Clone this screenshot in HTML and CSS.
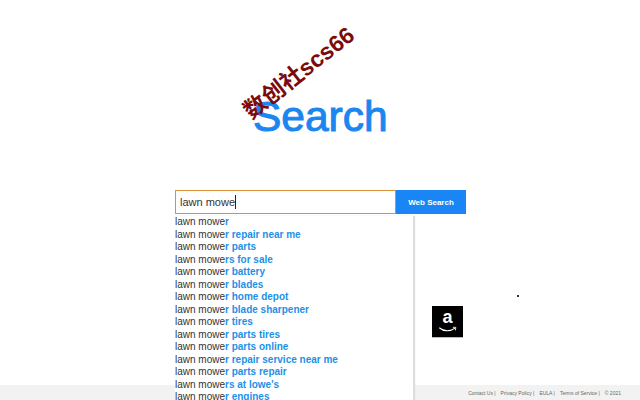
FILE: index.html
```html
<!DOCTYPE html>
<html lang="en">
<head>
<meta charset="utf-8">
<title>Search</title>
<link rel="stylesheet" href="styles.css">
</head>
<body>
<main class="page">
  <h1 class="logo">Search</h1>
  <div class="watermark">数创社scs66</div>
  <form class="search">
    <div class="field">lawn mowe<span class="caret"></span></div>
    <button class="go" type="button">Web Search</button>
  </form>
  <div class="below">
    <ul class="suggest">
      <li>lawn mowe<b>r</b></li>
      <li>lawn mowe<b>r repair near me</b></li>
      <li>lawn mowe<b>r parts</b></li>
      <li>lawn mowe<b>rs for sale</b></li>
      <li>lawn mowe<b>r battery</b></li>
      <li>lawn mowe<b>r blades</b></li>
      <li>lawn mowe<b>r home depot</b></li>
      <li>lawn mowe<b>r blade sharpener</b></li>
      <li>lawn mowe<b>r tires</b></li>
      <li>lawn mowe<b>r parts tires</b></li>
      <li>lawn mowe<b>r parts online</b></li>
      <li>lawn mowe<b>r repair service near me</b></li>
      <li>lawn mowe<b>r parts repair</b></li>
      <li>lawn mowe<b>rs at lowe's</b></li>
      <li>lawn mowe<b>r engines</b></li>
    </ul>
    <div class="side">
      <span class="dot"></span>
      <div class="amazon" aria-label="Amazon">
        <span class="amazon-a">a</span>
        <svg class="smile" viewBox="0 0 22 8" width="20" height="7">
          <path d="M1 2 C6 6.5 14 6.5 19 2.5" fill="none" stroke="#fff" stroke-width="1.2"/>
          <path d="M16.5 1.5 L20 1.6 L19.4 5" fill="none" stroke="#fff" stroke-width="1"/>
        </svg>
      </div>
    </div>
  </div>
</main>
<footer class="foot">
  <span>Contact Us |</span><span>Privacy Policy |</span><span>EULA |</span><span>Terms of Service |</span><span>© 2021</span>
</footer>
</body>
</html>
```
FILE: styles.css
```css
* { box-sizing: border-box; }
html, body { margin: 0; height: 400px; overflow: hidden; background: #fff; font-family: "Liberation Sans", Arial, sans-serif; }
body { position: relative; }
.page { display: flex; flex-direction: column; align-items: flex-start; padding: 93px 0 0 175px; }
.logo { margin: 0 0 0 78px; font-size: 42.5px; line-height: 48px; font-weight: 400; color: #1a86f0; -webkit-text-stroke: 1px #1a86f0; }
.watermark { position: absolute; left: 231px; top: 54px; width: 145px; font-family: "Liberation Sans", "Noto Sans CJK SC", sans-serif; font-size: 23px; line-height: 30px; font-weight: 700; color: #7a0a0e; white-space: nowrap; transform: rotate(-38deg); transform-origin: center; }
.search { display: flex; margin-top: 49px; }
.field { width: 221px; height: 24px; border: 1px solid #dc9138; padding-left: 4px; font-size: 11px; line-height: 22px; color: #333; display: flex; align-items: center; background: #fff; }
.caret { width: 1px; height: 14px; background: #222; }
.go { width: 70px; height: 24px; border: 0; padding: 0; background: #1a86f5; color: #fff; font: 700 8px "Liberation Sans", Arial, sans-serif; }
.below { display: flex; margin-top: 2px; }
.suggest { list-style: none; margin: 0; padding: 0; width: 239px; height: 185px; overflow: hidden; background: #fff; border-right: 1px solid #ddd; box-shadow: 1px 0 1px #ddd; position: relative; z-index: 1; }
.suggest li { height: 12.5px; font-size: 10px; line-height: 12.5px; color: #333; white-space: nowrap; }
.suggest b { color: #1e90e6; font-weight: 700; }
.side { position: relative; display: flex; flex-direction: column; align-items: flex-start; padding: 0 0 0 18px; }
.dot { position: absolute; left: 103px; top: 79px; width: 2px; height: 2px; background: #333; }
.amazon { margin-top: 90px; width: 31px; height: 32px; background: #000; display: flex; flex-direction: column; align-items: center; position: relative; border-bottom: 1px solid #bbb; }
.amazon-a { color: #fff; font-size: 18px; font-weight: 700; line-height: 20px; margin-top: 1px; }
.smile { margin-top: -1px; }
.foot { position: absolute; left: 0; right: 0; bottom: 0; height: 15px; background: #f2f2f2; display: flex; justify-content: flex-end; align-items: center; gap: 5px; padding-right: 19px; font-size: 5px; color: #666; }
```
